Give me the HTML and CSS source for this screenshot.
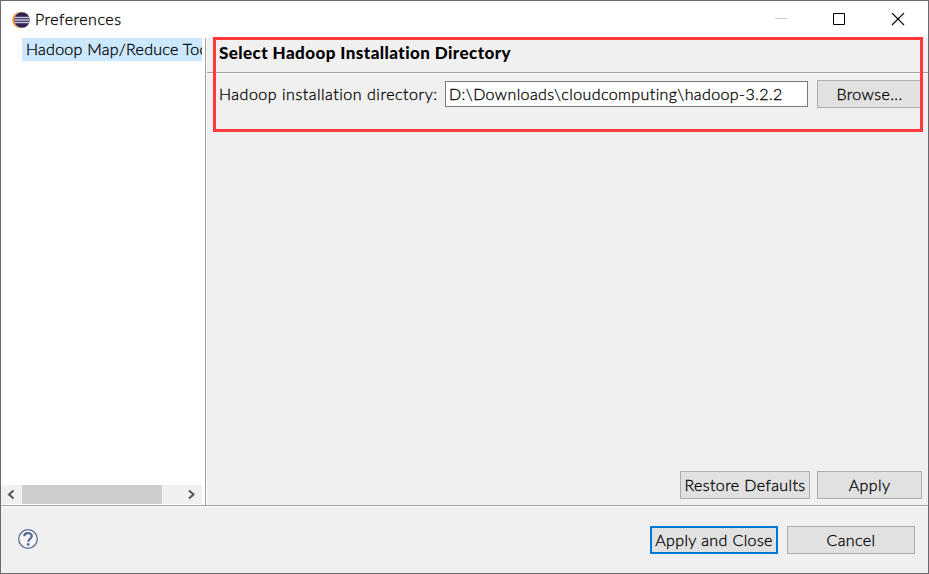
FILE: index.html
```html
<!DOCTYPE html>
<html lang="en">
<head>
<meta charset="utf-8">
<title>Preferences</title>
<link rel="stylesheet" href="styles.css">
</head>
<body>
<div class="window">
  <header class="titlebar">
    <svg class="logo" width="18" height="18" viewBox="0 0 18 18">
      <circle cx="8.2" cy="9" r="8" fill="#f59a32"/>
      <circle cx="10.400" cy="9" r="8" fill="#fbe3c4"/>
      <circle cx="10" cy="9" r="7.700" fill="#2c2255"/>
      <path d="M3 6.500h14M2.500 9h15M3 11.500h14" stroke="#c4c4da" stroke-width="1.500"/>
    </svg>
    <h1 class="title">Preferences</h1>
    <svg class="controls" width="130" height="14" viewBox="0 0 130 14" fill="none">
      <path d="M0 5.500h12" stroke="#ccc"/>
      <path d="M58.500 .5h11v11h-11z" stroke="#000"/>
      <path d="M117 0l12 12M129 0l-12 12" stroke="#000" stroke-width="1.100"/>
    </svg>
  </header>
  <main class="body">
    <nav class="sidebar">
      <div class="item">Hadoop Map/Reduce Tools</div>
      <div class="scrollbar">
        <svg width="21" height="19" viewBox="0 0 21 19"><path d="M12.500 5.500l-4.500 4 4.500 4" fill="none" stroke="#555" stroke-width="2"/></svg>
        <div class="thumb"></div>
        <svg width="21" height="19" viewBox="0 0 21 19"><path d="M8 5.500l4.500 4-4.500 4" fill="none" stroke="#555" stroke-width="2"/></svg>
      </div>
    </nav>
    <section class="page">
      <h2 class="heading">Select Hadoop Installation Directory</h2>
      <div class="field">
        <span class="label">Hadoop installation directory:</span>
        <div class="input">D:\Downloads\cloudcomputing\hadoop-3.2.2</div>
        <button class="btn browse">Browse...</button>
      </div>
      <div class="actions">
        <button class="btn restore">Restore Defaults</button>
        <button class="btn apply">Apply</button>
      </div>
    </section>
  </main>
  <footer class="footer">
    <svg width="20" height="20" viewBox="0 0 20 20">
      <circle cx="10" cy="10" r="9.300" fill="#f6f6f7" stroke="#566b8e" stroke-width="1.300"/>
      <path d="M6.300 7.300C6.300 3.200 13.800 3.200 13.800 7.100C13.800 9.700 10.300 9.500 10.300 12.700" fill="none" stroke="#526a93" stroke-width="2.200"/>
      <circle cx="10.200" cy="15.500" r="1.400" fill="#526a93"/>
    </svg>
    <div class="buttons">
      <button class="btn wide primary">Apply and Close</button>
      <button class="btn wide">Cancel</button>
    </div>
  </footer>
  <div class="highlight"></div>
</div>
</body>
</html>
```
FILE: styles.css
```css
* { box-sizing: border-box; }
body { margin: 0; font: 300 16px/20px Lato, "Open Sans", sans-serif; letter-spacing: .4px; color: #000; -webkit-text-stroke: .3px #000; }
.window { position: relative; width: 929px; height: 574px; border: 1px solid #6b6b6f; background: #f0f0f0; display: flex; flex-direction: column; overflow: hidden; }
.titlebar { height: 37px; flex: none; background: #fff; display: flex; align-items: center; padding: 0 23px 0 11px; }
.title { margin: -2px auto 0 5px; font-size: 16px; font-weight: 300; letter-spacing: .5px; }
.body { height: 467px; flex: none; display: flex; }
.sidebar { width: 204px; flex: none; background: #fff; display: flex; flex-direction: column; justify-content: space-between; padding-right: 3px; }
.item { margin-left: 21px; height: 23px; padding: 1px 0 0 4px; background: #cce8ff; overflow: hidden; white-space: nowrap; letter-spacing: .27px; }
.scrollbar { height: 19px; margin-bottom: 1px; background: #f0f0f0; display: flex; }
.scrollbar svg:last-child { margin-left: auto; }
.thumb { width: 140px; background: #cdcdcd; }
.page { flex: 1; display: flex; flex-direction: column; border-left: 1px solid #a0a0a0; box-shadow: inset 1px 0 #fff; }
.heading { height: 36px; margin: 0 0 0 1px; padding: 5px 0 0 12px; font-size: 17px; font-weight: 900; letter-spacing: .43px; -webkit-text-stroke: 0; border-bottom: 1px solid #fff; box-shadow: inset 0 -1px #a0a0a0; }
.field { display: flex; align-items: center; padding: 6px 0 0 13px; white-space: nowrap; }
.label { width: 226px; letter-spacing: .52px; }
.input { width: 363px; height: 26px; margin-right: 9px; padding: 2px 3px; border: 1px solid #7a7a7a; background: #fff; }
.btn { height: 28px; padding: 0; border: 1px solid #adadad; background: #e1e1e1; font: inherit; letter-spacing: inherit; color: inherit; white-space: nowrap; border-radius: 0; }
.browse, .apply { width: 105px; }
.restore { width: 130px; }
.actions { margin-top: auto; padding: 0 6px 6px 0; display: flex; justify-content: flex-end; gap: 7px; }
.footer { flex: 1; display: flex; align-items: center; justify-content: space-between; border-top: 1px solid #a0a0a0; box-shadow: inset 0 1px #fff; padding: 0 13px 2px 17px; }
.buttons { display: flex; gap: 9px; margin-top: 2px; }
.wide { width: 128px; }
.primary { border: 2px solid #0078d7; }
.highlight { position: absolute; left: 212px; top: 36px; width: 710px; height: 95px; border: 3px solid #ff3838; }
```
